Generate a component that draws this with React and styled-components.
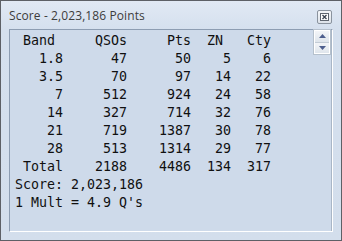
import React from 'react';
import styled, { createGlobalStyle } from 'styled-components';

const Global = createGlobalStyle`
	html, body {
		margin: 0;
		padding: 0;
		background: #ffffff;
	}
`;

const Window = styled.div`
	box-sizing: border-box;
	width: 342px;
	height: 241px;
	border: 1px solid #5d6066;
	background: linear-gradient(#e1e9f4 0px, #d5e0ee 28px, #d3deec 100%);
	display: flex;
	flex-direction: column;
	padding: 0 8px 8px 8px;
`;

const TitleBar = styled.div`
	height: 28px;
	display: flex;
	align-items: center;
	justify-content: space-between;
	padding-bottom: 0;
`;

const Title = styled.span`
	font-family: "Open Sans", "Noto Sans", sans-serif;
	font-size: 12px;
	color: #3c3c3c;
	margin-top: 1px;
	letter-spacing: 0.1px;
`;

const CloseBtn = styled.div`
	box-sizing: border-box;
	width: 15px;
	height: 14px;
	margin-right: 1px;
	margin-top: 4px;
	border: 1px solid #8a939e;
	border-radius: 2px;
	background: linear-gradient(#f4f6f9, #dde3ea);
	display: flex;
	align-items: center;
	justify-content: center;
`;

const Client = styled.div`
	flex: 1;
	display: flex;
	border-top: 1px solid #8d9db2;
	border-left: 1px solid #8d9db2;
	border-right: 1px solid #ffffff;
	border-bottom: 1px solid #ffffff;
	background: #cedaea;
`;

const Content = styled.div`
	flex: 1;
	padding: 2px 0 0 5px;
	font-family: "DejaVu Sans Mono", "Liberation Mono", monospace;
	font-size: 13.3px;
	line-height: 18px;
	color: #101010;
`;

const Table = styled.div`
	display: grid;
	grid-template-columns: 6ch 8ch 8ch 5ch 5ch;
	width: max-content;
`;

const Cell = styled.div`
	text-align: right;
	white-space: pre;
	padding-right: ${p => (p.$pad ? '1ch' : '0')};
`;

const Line = styled.div`
	white-space: pre;
`;

const ScrollBar = styled.div`
	width: 17px;
	display: flex;
	flex-direction: column;
	border-right: 1px solid #a9b6c6;
`;

const Arrows = styled.div`
	box-sizing: border-box;
	width: 16px;
	height: 24px;
	border: 1px solid #ffffff;
	outline: 1px solid #b5c0cc;
	display: flex;
	flex-direction: column;
	background: #dfe6ef;
`;

const ArrowBtn = styled.div`
	flex: 1;
	display: flex;
	align-items: center;
	justify-content: center;
	background: linear-gradient(#f3f5f8, #dfe5ec);
	border-bottom: ${p => (p.$top ? '1px solid #c3ccd6' : 'none')};
`;

const rows = [
	['1.8', '47', '50', '5', '6'],
	['3.5', '70', '97', '14', '22'],
	['7', '512', '924', '24', '58'],
	['14', '327', '714', '32', '76'],
	['21', '719', '1387', '30', '78'],
	['28', '513', '1314', '29', '77'],
	['Total', '2188', '4486', '134', '317'],
];

const CloseIcon = () => (
	<svg width="9" height="8" viewBox="0 0 9 8">
		<rect x="0.5" y="0.5" width="8" height="7" fill="#fff" stroke="#5f6670" />
		<path d="M2.5 2 L6.5 6 M6.5 2 L2.5 6" stroke="#3b4350" strokeWidth="1.3" />
	</svg>
);

const Arrow = ({ up }) => (
	<svg width="7" height="4" viewBox="0 0 7 4">
		<path d={up ? 'M0 4 L3.5 0 L7 4 Z' : 'M0 0 L3.5 4 L7 0 Z'} fill="#4e5f8e" />
	</svg>
);

export default function App() {
	return (
		<>
			<Global />
			<Window>
				<TitleBar>
					<Title>Score - 2,023,186 Points</Title>
					<CloseBtn>
						<CloseIcon />
					</CloseBtn>
				</TitleBar>
				<Client>
					<Content>
						<Table>
							<Cell $pad>Band</Cell>
							<Cell>QSOs</Cell>
							<Cell>Pts</Cell>
							<Cell $pad>ZN</Cell>
							<Cell>Cty</Cell>
							{rows.map(r => r.map((v, i) => <Cell key={r[0] + i}>{v}</Cell>))}
						</Table>
						<Line>Score: 2,023,186</Line>
						<Line>1 Mult = 4.9 Q's</Line>
					</Content>
					<ScrollBar>
						<Arrows>
							<ArrowBtn $top>
								<Arrow up />
							</ArrowBtn>
							<ArrowBtn>
								<Arrow />
							</ArrowBtn>
						</Arrows>
					</ScrollBar>
				</Client>
			</Window>
		</>
	);
}
